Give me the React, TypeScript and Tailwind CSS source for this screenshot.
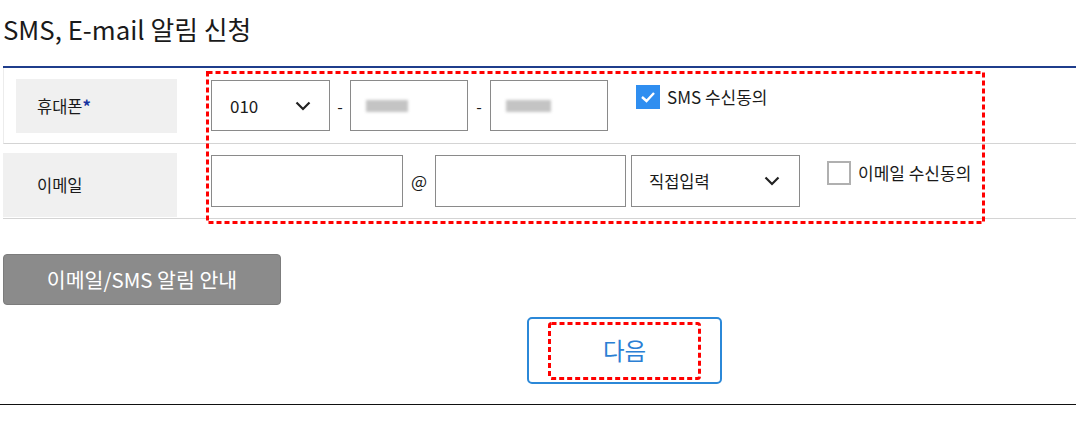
import React from 'react';

function Chevron() {
  return (
    <svg width="16" height="10" viewBox="0 0 16 10" className="block">
      <polyline points="1.5,1.5 8,8 14.5,1.5" fill="none" stroke="#222" strokeWidth="2.2" />
    </svg>
  );
}

function Blur({ w }: { w: number }) {
  return (
    <div className="flex items-center blur-[1.5px]" style={{ width: w }}>
      <div className="h-[12px] w-full bg-[#c4c4c4]" />
    </div>
  );
}

export default function App() {
  return (
    <div
      className="relative w-[1076px] h-[422px] bg-white text-[#1a1a1a]"
      style={{ fontFamily: '"Noto Sans CJK KR", "Noto Sans", sans-serif' }}
    >
      <div className="h-[66px] pl-[3px] pt-[11px]">
        <h1 className="text-[25.8px] leading-[36px] font-normal">SMS, E-mail 알림 신청</h1>
      </div>

      <div className="ml-[3px] border-t-2 border-[#1f3d8c]">
        {/* 휴대폰 */}
        <div className="flex h-[76px] border-b border-[#d4d4d4] border-l border-l-[#ececec]">
          <div className="ml-[12px] mt-[11px] h-[54px] w-[161px] bg-[#f0f0f0] flex items-center pl-[21px] text-[16.5px]">
            휴대폰<span className="text-[#1533a0] font-bold">*</span>
          </div>
          <div className="ml-[34px] mt-[12px] flex items-start">
            <div className="h-[51px] w-[119px] border border-[#8a8a8a] flex items-center justify-between pl-[18px] pr-[18px] text-[17px]">
              010
              <Chevron />
            </div>
            <div className="w-[20px] h-[51px] flex items-center justify-center text-[16px]">-</div>
            <div className="h-[51px] w-[118px] border border-[#8a8a8a] flex items-center pl-[15px]">
              <Blur w={42} />
            </div>
            <div className="w-[22px] h-[51px] flex items-center justify-center text-[16px]">-</div>
            <div className="h-[51px] w-[118px] border border-[#8a8a8a] flex items-center pl-[15px]">
              <Blur w={45} />
            </div>
            <label className="ml-[28px] mt-[4px] flex items-center gap-[7px] text-[17px]">
              <span className="w-[24px] h-[24px] bg-[#2f8ef0] flex items-center justify-center">
                <svg width="16" height="12" viewBox="0 0 16 12">
                  <polyline points="2,6 6.5,10 14,2" fill="none" stroke="#fff" strokeWidth="2.4" />
                </svg>
              </span>
              SMS 수신동의
            </label>
          </div>
        </div>

        {/* 이메일 */}
        <div className="flex h-[75px] border-b border-[#d4d4d4]">
          <div className="mt-[9px] h-[64px] w-[174px] bg-[#f0f0f0] flex items-center pl-[34px] text-[16.5px]">
            이메일
          </div>
          <div className="ml-[34px] mt-[11px] flex items-start">
            <div className="h-[52px] w-[192px] border border-[#8a8a8a]" />
            <div className="w-[32px] h-[52px] flex items-center justify-center text-[17px]">@</div>
            <div className="h-[52px] w-[191px] border border-[#8a8a8a]" />
            <div className="ml-[5px] h-[52px] w-[169px] border border-[#8a8a8a] flex items-center justify-between pl-[17px] pr-[19px] text-[16.5px]">
              직접입력
              <Chevron />
            </div>
            <label className="ml-[27px] mt-[5px] flex items-center gap-[7px] text-[17px]">
              <span className="w-[24px] h-[24px] border-2 border-[#b0b0b0] bg-white" />
              이메일 수신동의
            </label>
          </div>
        </div>
      </div>

      <button className="mt-[35px] ml-[3px] block h-[51px] w-[278px] rounded-[4px] bg-[#8b8b8b] border border-[#7c7c7c] text-white text-[20.5px]">
        이메일/SMS 알림 안내
      </button>

      <button className="mt-[12px] ml-[527px] block h-[67px] w-[195px] rounded-[5px] border-2 border-[#2b88d8] bg-white text-[#2b7fd4] text-[23.5px]">
        다음
      </button>

      <div className="mt-[20px] h-[1px] w-full bg-[#111]" />

      {/* annotation boxes */}
      <svg className="absolute left-[206px] top-[71px] pointer-events-none" width="779" height="153">
        <rect x="1.5" y="1.5" width="776" height="150" fill="none" stroke="#ff0000" strokeWidth="3" strokeDasharray="5 3" />
      </svg>
      <svg className="absolute left-[548px] top-[322px] pointer-events-none" width="153" height="58">
        <rect x="1.5" y="1.5" width="150" height="55" rx="2" fill="none" stroke="#ff0000" strokeWidth="3" strokeDasharray="5 3" />
      </svg>
    </div>
  );
}
